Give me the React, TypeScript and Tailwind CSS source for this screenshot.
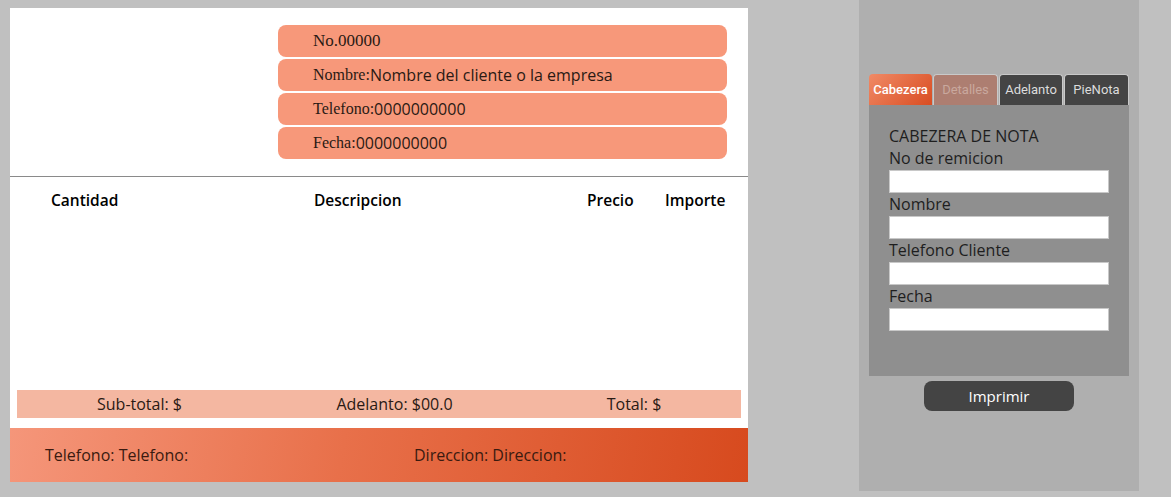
import { FC } from "react";

const headerRows = [
  { label: "No.00000", value: "" },
  { label: "Nombre:", value: "Nombre del cliente o la empresa" },
  { label: "Telefono:", value: "0000000000" },
  { label: "Fecha:", value: "0000000000" },
];

const fields = ["No de remicion", "Nombre", "Telefono Cliente", "Fecha"];

const Nota: FC = () => (
  <div className="mt-[8px] ml-[10px] w-[738px] h-[474px] bg-white flex flex-col font-['Open_Sans',sans-serif]">
    <div className="pt-[17px] pl-[268px] flex flex-col gap-[2px]">
      {headerRows.map((r) => (
        <div key={r.label} className="w-[449px] h-[32px] rounded-[8px] bg-[#f7987a] flex items-center pl-[35px] text-[#2a1a14]">
          <span className={r.value ? "font-['Liberation_Serif',serif] text-[16px]" : "font-['Liberation_Serif',serif] text-[17px]"}>{r.label}</span>
          <span className="text-[16px]">{r.value}</span>
        </div>
      ))}
    </div>
    <div className="mt-[17px] h-px bg-[#8a8a8a]" />
    <div className="flex items-center h-[48px] text-[15.5px] font-semibold text-black">
      <span className="w-[304px] pl-[41px]">Cantidad</span>
      <span className="w-[273px]">Descripcion</span>
      <span className="w-[78px]">Precio</span>
      <span>Importe</span>
    </div>
    <div className="flex-1" />
    <div className="mx-[7px] h-[28px] bg-[#f4b7a1] flex items-center text-[16px] text-[#2a1a14]">
      <span className="w-[245px] text-center">Sub-total: $</span>
      <span className="w-[265px] text-center">Adelanto: $00.0</span>
      <span className="w-[214px] text-center">Total: $</span>
    </div>
    <div className="mt-[10px] h-[54px] bg-[linear-gradient(100deg,#f5967a_0%,#e8704a_45%,#d74a1e_100%)] flex items-center text-[16px] text-[#3a1a10]">
      <span className="w-[404px] pl-[35px]">Telefono: Telefono:</span>
      <span>Direccion: Direccion:</span>
    </div>
  </div>
);

const Panel: FC = () => (
  <div className="ml-[111px] w-[280px] h-[491px] bg-[#afafaf] flex flex-col items-center">
    <div className="mt-[74px] w-[260px] flex gap-[1px] font-['Roboto',sans-serif] text-[13px]">
      <div className="w-[63px] h-[31px] rounded-t-[4px] bg-[linear-gradient(135deg,#f08a66,#d94d22)] text-white font-medium flex items-center justify-center">
        Cabezera
      </div>
      <div className="w-[65px] h-[31px] rounded-t-[4px] border border-b-0 border-[#c9c9c9] bg-[#ad7e71] text-[#c9a89e] flex items-center justify-center">
        Detalles
      </div>
      <div className="w-[64px] h-[31px] rounded-t-[4px] border border-b-0 border-[#c9c9c9] bg-[#444444] text-[#dcdcdc] flex items-center justify-center">
        Adelanto
      </div>
      <div className="w-[65px] h-[31px] rounded-t-[4px] border border-b-0 border-[#c9c9c9] bg-[#444444] text-[#dcdcdc] flex items-center justify-center">
        PieNota
      </div>
    </div>
    <div className="w-[260px] h-[271px] bg-[#8f8f8f] pt-[21px] pl-[20px] font-['Open_Sans',sans-serif] text-[16px] text-[#1e1e1e] leading-[23px]">
      <div className="leading-[21px]">CABEZERA DE NOTA</div>
      {fields.map((f) => (
        <div key={f}>
          <div>{f}</div>
          <input className="w-[220px] h-[23px] bg-white border border-[#c8c8c8] block outline-none" />
        </div>
      ))}
    </div>
    <button className="mt-[5px] w-[150px] h-[30px] rounded-[8px] bg-[#444444] text-white text-[15px] font-['Open_Sans',sans-serif]">
      Imprimir
    </button>
  </div>
);

export default function App() {
  return (
    <div className="w-[1171px] h-[497px] bg-[#c0c0c0] flex items-start overflow-hidden">
      <Nota />
      <Panel />
    </div>
  );
}
